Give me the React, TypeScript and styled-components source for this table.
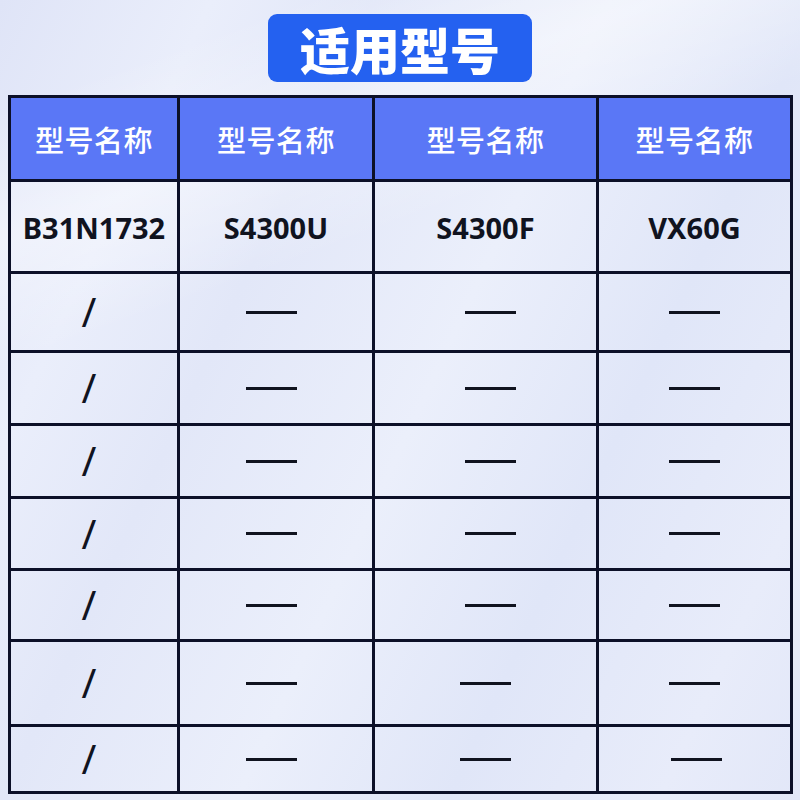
import styled, { createGlobalStyle } from "styled-components";

const GlobalStyle = createGlobalStyle`
    html, body {
        margin: 0;
        padding: 0;
    }
    body {
        width: 800px;
        height: 800px;
        overflow: hidden;
        font-family: "Noto Sans", "Noto Sans CJK SC", sans-serif;
    }
`;

const Page = styled.div`
    width: 800px;
    height: 800px;
    box-sizing: border-box;
    padding-top: 14px;
    display: flex;
    flex-direction: column;
    align-items: center;
    gap: 13px;
    background:
        linear-gradient(160deg, rgba(255,255,255,0) 10%, rgba(255,255,255,0.4) 22%, rgba(255,255,255,0) 34%),
        linear-gradient(115deg, #dfe4f7 0%, #eaeefb 18%, #e2e7f8 32%, #ebeffb 52%, #e0e6f8 70%, #e8ecfa 88%, #e2e7f8 100%);
`;

const TitleBadge = styled.h1`
    margin: 0;
    width: 264px;
    height: 68px;
    box-sizing: border-box;
    display: flex;
    align-items: center;
    justify-content: center;
    border-radius: 9px;
    background: #2461f0;
    color: #ffffff;
    font-family: "Noto Sans CJK SC", sans-serif;
    font-size: 50px;
    font-weight: 900;
    line-height: 1;
`;

const Table = styled.div`
    align-self: flex-start;
    margin-left: 8px;
    display: grid;
    grid-template-columns: 169px 195px 224px 194px;
    grid-template-rows: 84px 92px 79px 73px 73px 72px 71px 85px 67px;
    border-left: 3px solid #0c1028;
    border-top: 3px solid #0c1028;
`;

const Cell = styled.div<{ $head?: boolean }>`
    box-sizing: border-box;
    border-right: 3px solid #0c1028;
    border-bottom: 3px solid #0c1028;
    display: flex;
    align-items: center;
    justify-content: center;
    background: ${(p) => (p.$head ? "#5a77f6" : "transparent")};
    color: ${(p) => (p.$head ? "#ffffff" : "#10131f")};
`;

const HeadText = styled.span`
    font-family: "Noto Sans CJK SC", sans-serif;
    font-size: 29px;
    font-weight: 500;
    letter-spacing: 0.5px;
`;

const ModelText = styled.span`
    font-family: "Noto Sans", sans-serif;
    font-size: 29px;
    font-weight: 700;
    margin-top: 2px;
`;

const Slash = styled.span`
    font-family: "Noto Sans", sans-serif;
    font-size: 40px;
    font-weight: 400;
    line-height: 1;
    margin-left: -10px;
`;

const Dash = styled.span<{ $shift?: number }>`
    display: block;
    width: 51px;
    height: 3px;
    background: #10131f;
    margin-left: ${(p) => (p.$shift ?? 0) * 2}px;
`;

const models = ["B31N1732", "S4300U", "S4300F", "VX60G"];

const dashShifts = [
    [-10, 10, 0],
    [-10, 10, 0],
    [-10, 10, 0],
    [-10, 10, 0],
    [-10, 10, 0],
    [-10, 0, 0],
    [-10, 0, 3],
];

export default function App() {
    return (
        <>
            <GlobalStyle />
            <Page>
                <TitleBadge>适用型号</TitleBadge>
                <Table>
                    {models.map((_, i) => (
                        <Cell $head key={"h" + i}>
                            <HeadText>型号名称</HeadText>
                        </Cell>
                    ))}
                    {models.map((m) => (
                        <Cell key={m}>
                            <ModelText>{m}</ModelText>
                        </Cell>
                    ))}
                    {dashShifts.map((row, r) => [
                        <Cell key={"s" + r}>
                            <Slash>/</Slash>
                        </Cell>,
                        ...row.map((s, c) => (
                            <Cell key={"d" + r + "-" + c}>
                                <Dash $shift={s / 2} />
                            </Cell>
                        )),
                    ])}
                </Table>
            </Page>
        </>
    );
}
